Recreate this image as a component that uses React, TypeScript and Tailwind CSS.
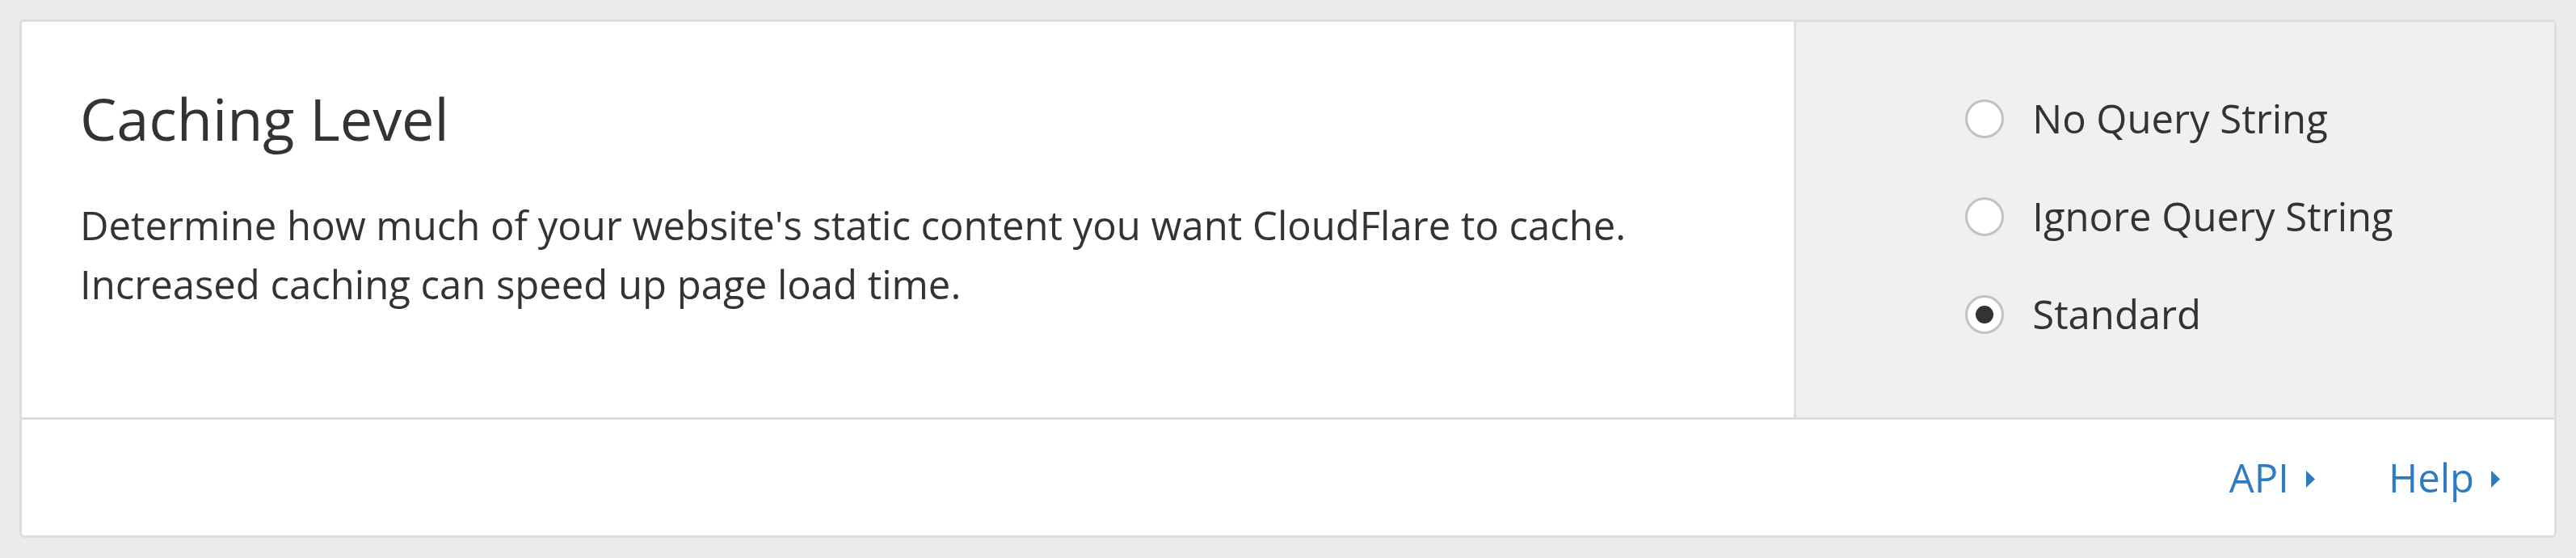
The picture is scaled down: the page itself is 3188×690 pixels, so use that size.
import { useState } from 'react'

// Caching level setting card — scaled 3x to match the capture.

const OPTIONS = [
  { key: 'none', label: 'No Query String' },
  { key: 'ignore', label: 'Ignore Query String' },
  { key: 'standard', label: 'Standard' },
] as const

function Caret() {
  return (
    <svg width="11" height="21" viewBox="0 0 11 21" className="mt-[4px] fill-[#2f7bbf]">
      <path d="M0 0 L11 10.5 L0 21 Z" />
    </svg>
  )
}

export default function App() {
  const [level, setLevel] = useState<string>('standard')

  return (
    <div className="min-h-[690px] bg-[#ebebeb] p-[24px] font-['Open_Sans',sans-serif] text-[#333]">
      <div className="overflow-hidden rounded-[6px] border-[3px] border-[#dedede] bg-white">
        <div className="flex h-[492px] border-b-[3px] border-[#dedede]">
          <div className="flex-1 px-[72px] pt-[76px]">
            <h3 className="text-[72px] leading-[86px] font-normal">Caching Level</h3>
            <p className="mt-[53px] text-[49px] leading-[73px]">
              Determine how much of your website's static content you want CloudFlare to cache.
              <br />
              Increased caching can speed up page load time.
            </p>
          </div>
          <div className="flex w-[941px] items-center justify-center border-l-[3px] border-[#dedede] bg-[#f0f0f0] pb-[8px] pl-[10px]">
            <div className="flex flex-col gap-[48px]">
              {OPTIONS.map((o) => (
                <label key={o.key} className="flex cursor-pointer items-center gap-[35px] text-[49px] leading-[73px]">
                  <span
                    onClick={() => setLevel(o.key)}
                    className="flex h-[48px] w-[48px] items-center justify-center rounded-full border-[3px] border-[#c2c2c2] bg-white"
                  >
                    {level === o.key && <span className="h-[22px] w-[22px] rounded-full bg-[#333]" />}
                  </span>
                  <span onClick={() => setLevel(o.key)}>{o.label}</span>
                </label>
              ))}
            </div>
          </div>
        </div>
        <div className="flex h-[143px] items-center justify-end gap-[91px] pr-[67px]">
          <a className="flex items-center gap-[21px] text-[49px] text-[#2f7bbf]">
            API <Caret />
          </a>
          <a className="flex items-center gap-[21px] text-[49px] text-[#2f7bbf]">
            Help <Caret />
          </a>
        </div>
      </div>
    </div>
  )
}
